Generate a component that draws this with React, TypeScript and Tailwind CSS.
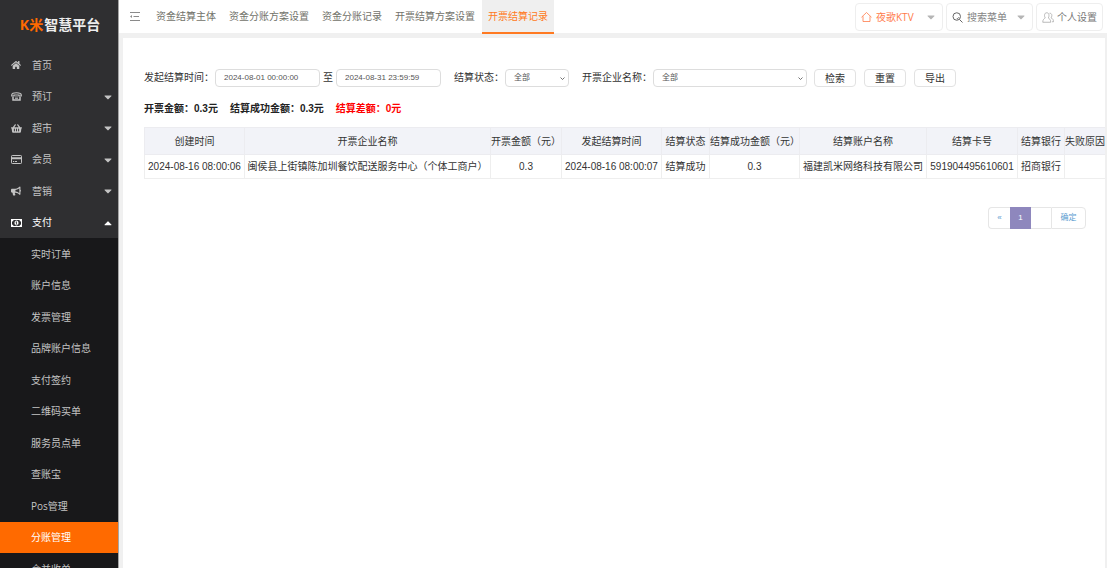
import { useState } from 'react'
import type { ReactNode } from 'react'
import { FaBullhorn, FaCaretDown, FaCaretUp, FaHome, FaShoppingBasket } from 'react-icons/fa'

const PhoneIcon = () => (
  <svg viewBox="0 0 22 18" className="h-[9px] w-[11px]" fill="none" stroke="currentColor">
    <path d="M1.5 8V6C1.5 3 5 1.500 11 1.500S20.500 3 20.500 6V8H16V6H6V8Z" strokeWidth="2.400" />
    <path d="M4 9.500V16h14V9.500" strokeWidth="3" />
    <path d="M8 10h6M8 13h6" strokeWidth="1.500" />
  </svg>
)

const CardIcon = () => (
  <svg viewBox="0 0 22 18" className="h-[9px] w-[11px]" fill="none" stroke="currentColor" strokeWidth="2">
    <rect x="1" y="1" width="20" height="16" rx="1.500" />
    <path d="M1 6.500h20" strokeWidth="4" />
    <path d="M4 13h2.500M8 13h4" />
  </svg>
)

const MoneyIcon = () => (
  <svg viewBox="0 0 22 16" className="h-2 w-[11px]">
    <path
      fill="currentColor"
      fillRule="evenodd"
      d="M0 0h22v16H0zM5 2a3 3 0 0 1-3 3v6a3 3 0 0 1 3 3h12a3 3 0 0 1 3-3V5a3 3 0 0 1-3-3zM11 3c2.400 0 4 2.200 4 5s-1.600 5-4 5-4-2.200-4-5 1.600-5 4-5zM10.300 5L8.800 6.200l.7.800.7-.4V10H9v1h4v-1h-1.200V5z"
    />
  </svg>
)

const menu: { label: string; icon: ReactNode; caret?: 'up' | 'down' }[] = [
  { label: '首页', icon: <FaHome size={10} /> },
  { label: '预订', icon: <PhoneIcon />, caret: 'down' },
  { label: '超市', icon: <FaShoppingBasket size={11} />, caret: 'down' },
  { label: '会员', icon: <CardIcon />, caret: 'down' },
  { label: '营销', icon: <FaBullhorn size={10} />, caret: 'down' },
  { label: '支付', icon: <MoneyIcon />, caret: 'up' },
]

const payMenu = ['实时订单', '账户信息', '发票管理', '品牌账户信息', '支付签约', '二维码买单', '服务员点单', '查账宝', 'Pos管理', '分账管理', '合并收单']

const tabs = ['资金结算主体', '资金分账方案设置', '资金分账记录', '开票结算方案设置', '开票结算记录']

const columns = [
  { title: '创建时间', width: 'w-[100px]' },
  { title: '开票企业名称', width: 'w-[246px]' },
  { title: '开票金额（元）', width: 'w-[71px]' },
  { title: '发起结算时间', width: 'w-[100px]' },
  { title: '结算状态', width: 'w-[48px]' },
  { title: '结算成功金额（元）', width: 'w-[90px]' },
  { title: '结算账户名称', width: 'w-[127px]' },
  { title: '结算卡号', width: 'w-[91px]' },
  { title: '结算银行', width: 'w-[47px]' },
  { title: '失败原因', width: 'w-auto' },
]

const rows = [
  ['2024-08-16 08:00:06', '闽侯县上街镇陈加圳餐饮配送服务中心（个体工商户）', '0.3', '2024-08-16 08:00:07', '结算成功', '0.3', '福建凯米网络科技有限公司', '591904495610601', '招商银行', ''],
]

function Sidebar() {
  const [active, setActive] = useState('分账管理')

  return (
    <aside className="w-[119px] shrink-0 overflow-hidden border-r border-[#a5a5a5] bg-[#2f2f31] font-['Open_Sans','Noto_Sans_CJK_SC',sans-serif] text-[10px] text-[#c4c4c4]">
      <div className="flex h-[49px] items-center justify-center pl-0.5 text-[14px] font-bold text-[#ededed]">
        <span className="mr-px text-[#ff6a00]">K米</span>智慧平台
      </div>
      <nav>
        <ul>
          {menu.map(item => (
            <li key={item.label} className="h-[31px] odd:h-8">
              <button type="button" className={`flex h-full w-full items-center pr-1 pl-[11px] ${item.caret === 'up' ? 'text-white' : ''}`}>
                <span className="flex w-[21px] items-center">{item.icon}</span>
                <span className="flex-1 text-left">{item.label}</span>
                {item.caret === 'down' && <FaCaretDown size={12} />}
                {item.caret === 'up' && <FaCaretUp size={12} />}
              </button>
            </li>
          ))}
        </ul>
        <ul className="bg-[#18181a]">
          {payMenu.map(label => (
            <li key={label} className="h-[31px] odd:h-8">
              <a
                href="#"
                onClick={() => setActive(label)}
                className={`flex h-full items-center pl-[31px] ${active === label ? 'bg-[#ff6a00] text-white' : ''}`}
              >
                {label}
              </a>
            </li>
          ))}
        </ul>
      </nav>
    </aside>
  )
}

function Topbar() {
  const box = 'flex h-7 items-center rounded-sm border border-[#eeeeee]'

  return (
    <header className="flex h-[33px] shrink-0 items-start bg-white font-['Open_Sans','Noto_Sans_CJK_SC',sans-serif] text-[10px] text-[#72726a]">
      <button type="button" aria-label="菜单" className="flex h-[33px] w-[31px] items-center justify-center text-[#8a8a8a]">
        <svg viewBox="0 0 20 18" className="h-[9px] w-2.5" fill="none" stroke="currentColor" strokeWidth="2">
          <path d="M0 1h20M7 9h11M0 17h20" />
          <path d="M4 6v6L0 9z" fill="currentColor" stroke="none" />
        </svg>
      </button>
      <nav className="flex gap-px">
        {tabs.map((tab, i) => (
          <a
            key={tab}
            href="#"
            className={`flex h-[34px] items-center border-b-2 px-1.5 pt-px whitespace-nowrap ${i === tabs.length - 1 ? 'border-[#ff7a22] bg-[#efefef] text-[#ff7a22]' : 'border-transparent'}`}
          >
            {tab}
          </a>
        ))}
      </nav>
      <div className="mt-[3px] mr-1 ml-auto flex gap-[3px]">
        <button type="button" className={`${box} w-[88px] px-[5px] text-[#ff7b4a]`}>
          <svg viewBox="0 0 22 20" className="mr-1 h-2.5 w-[11px]" fill="none" stroke="currentColor" strokeWidth="1.600">
            <path d="M1 10.500L11 1l10 9.500M4 8.500V19h14V8.500" />
          </svg>
          夜歌KTV
          <FaCaretDown size={12} className="ml-auto text-[#b5b5b5]" />
        </button>
        <button type="button" className={`${box} w-[87px] px-[5px] text-[#858585]`}>
          <svg viewBox="0 0 22 22" className="mr-1 h-[11px] w-[11px]" fill="none" stroke="#666" strokeWidth="2">
            <circle cx="9.500" cy="9" r="7.500" />
            <path d="M15 15l6 6M9.500 13.500c2 0 3.500-1.200 4-3" />
          </svg>
          搜索菜单
          <FaCaretDown size={12} className="ml-auto text-[#b5b5b5]" />
        </button>
        <button type="button" className={`${box} w-[67px] justify-center text-[#777777]`}>
          <svg viewBox="0 0 24 22" className="mr-[3px] h-[11px] w-3" fill="none" stroke="#aaa" strokeWidth="1.600">
            <path d="M6.500 12C4 8 4.500 1.500 9.500 1.500S15 8 12.500 12c2 1.500 5 2.500 5 8.500H1.500C1.500 14.500 4.500 13.500 6.500 12z" />
            <path d="M15 2.500c5-.5 6 5 3 9 3 1.500 5 3.500 5 8h-3" />
          </svg>
          个人设置
        </button>
      </div>
    </header>
  )
}

function Select({ id, width, options }: { id: string; width: string; options: string[] }) {
  return (
    <span className={`relative flex ${width}`}>
      <select id={id} className="h-[18px] w-full appearance-none rounded-sm border border-[#dddddd] bg-white pt-px pl-2 text-[8px] text-[#555555]">
        {options.map(option => (
          <option key={option}>{option}</option>
        ))}
      </select>
      <svg viewBox="0 0 10 6" className="pointer-events-none absolute top-2 right-1 h-[3px] w-[5px]" fill="none" stroke="#444" strokeWidth="1.500">
        <path d="M1 1l4 4 4-4" />
      </svg>
    </span>
  )
}

function SearchForm() {
  const [start, setStart] = useState('2024-08-01 00:00:00')
  const [end, setEnd] = useState('2024-08-31 23:59:59')
  const input = 'h-[18px] w-[105px] rounded-sm border border-[#dddddd] px-2 text-[8px] text-[#555555]'

  return (
    <form className="flex items-center whitespace-nowrap" onSubmit={e => e.preventDefault()}>
      <label htmlFor="start">发起结算时间：</label>
      <input id="start" className={`${input} ml-px`} value={start} onChange={e => setStart(e.target.value)} />
      <label htmlFor="end" className="mx-[3px]">至</label>
      <input id="end" className={input} value={end} onChange={e => setEnd(e.target.value)} />
      <label htmlFor="status" className="ml-[13px]">结算状态：</label>
      <Select id="status" width="w-16 ml-px" options={['全部', '结算成功', '结算失败']} />
      <label htmlFor="company" className="ml-[13px]">开票企业名称：</label>
      <Select id="company" width="w-[154px] ml-px" options={['全部']} />
      <div className="mt-px ml-[7px] flex gap-2">
        {['检索', '重置', '导出'].map(text => (
          <button key={text} type="submit" className="h-[18px] w-[42px] rounded-sm border border-[#e2e2e2] bg-white">
            {text}
          </button>
        ))}
      </div>
    </form>
  )
}

export default function App() {
  return (
    <div className="flex h-screen overflow-hidden bg-[#f0f0f0]">
      <Sidebar />
      <div className="flex min-w-0 flex-1 flex-col">
        <Topbar />
        <main className="mt-[5px] mr-0.5 ml-1 flex-1 overflow-hidden bg-white pt-[30px] pl-[21px] font-['Liberation_Sans','Noto_Sans_CJK_SC',sans-serif] text-[10px] text-[#333333]">
          <SearchForm />
          <div className="mt-3.5 flex gap-3 leading-4 font-bold text-[#222222]">
            <span>开票金额：0.3元</span>
            <span>结算成功金额：0.3元</span>
            <span className="text-[#ff0000]">结算差额：0元</span>
          </div>
          <table className="mt-2.5 w-full table-fixed border-collapse text-center whitespace-nowrap">
            <thead className="bg-[#f2f3f8]">
              <tr className="h-[27px]">
                {columns.map(col => (
                  <th key={col.title} className={`${col.width} border border-[#ececf0] p-0 font-normal last:border-r-0`}>{col.title}</th>
                ))}
              </tr>
            </thead>
            <tbody>
              {rows.map(row => (
                <tr key={row[0]} className="h-6">
                  {row.map((cell, i) => (
                    <td key={i} className="border border-[#eeeeee] p-0 last:border-r-0">{cell}</td>
                  ))}
                </tr>
              ))}
            </tbody>
          </table>
          <div className="mt-7 mr-[19px] flex justify-end text-[8px] text-[#5b9bd0]">
            <button type="button" className="h-[22px] w-[22px] rounded-l-sm border border-r-0 border-[#e6e6e6]">«</button>
            <button type="button" className="h-[22px] w-[21px] bg-[#8e87bd] text-white">1</button>
            <input aria-label="页码" className="h-[22px] w-5 border-y border-[#e6e6e6] text-center" />
            <button type="button" className="h-[22px] w-[35px] rounded-r-sm border border-[#e6e6e6]">确定</button>
          </div>
        </main>
      </div>
    </div>
  )
}
